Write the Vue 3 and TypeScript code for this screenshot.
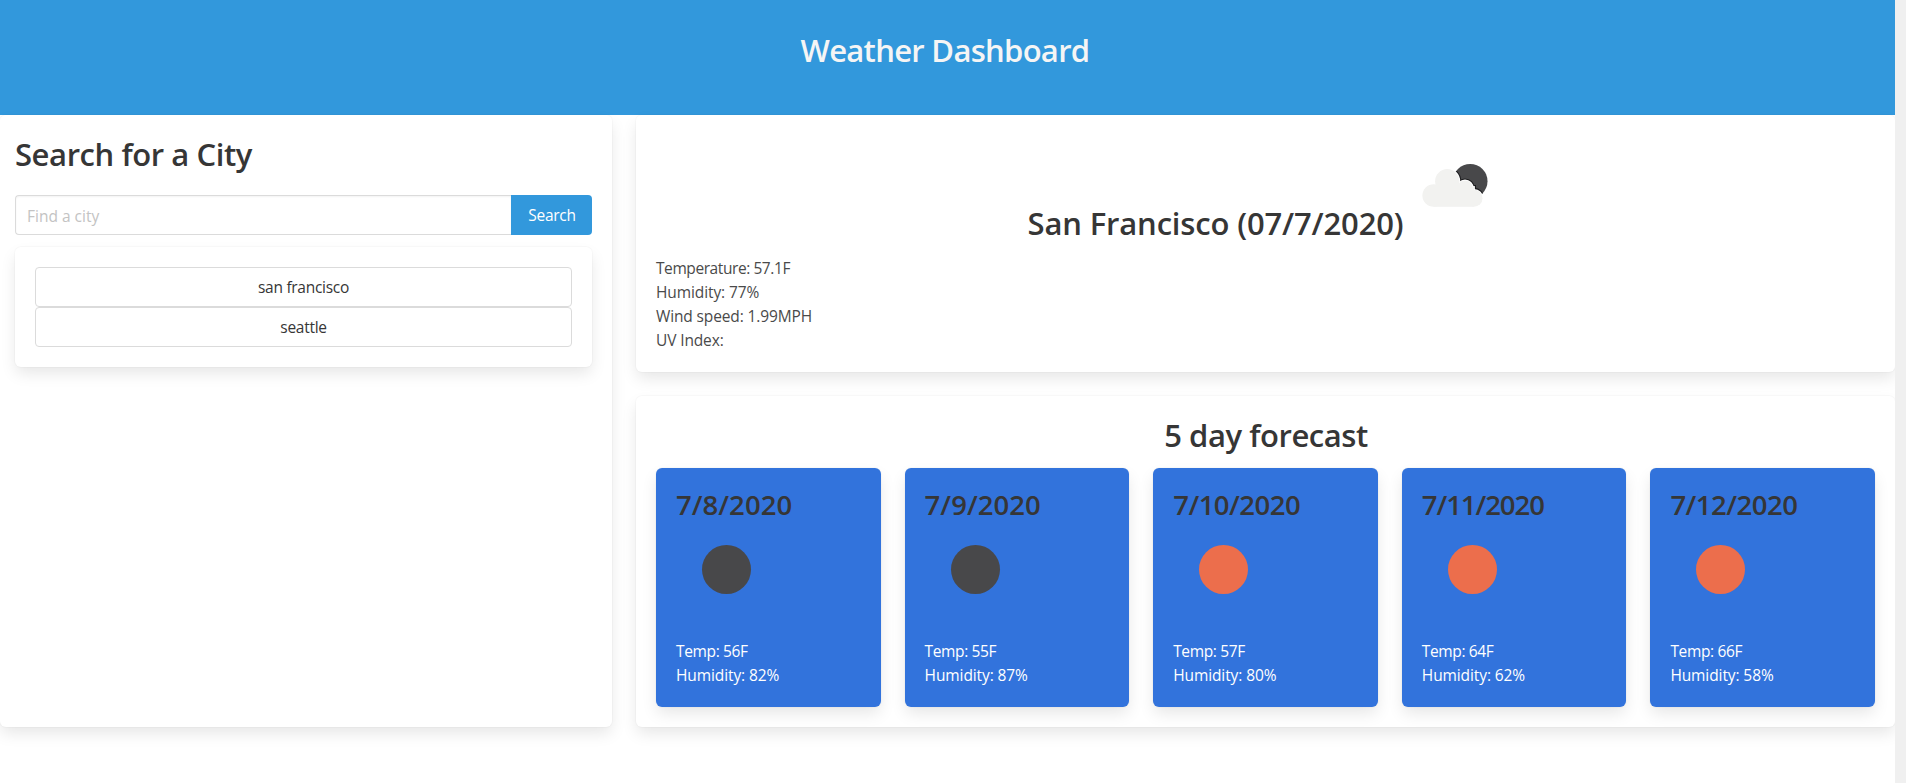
<script setup lang="ts">
import { ref } from 'vue'

interface ForecastDay {
  date: string
  sky: 'night' | 'sunny'
  temp: number
  humidity: number
  fit: string
}

const query = ref('')
const history: string[] = ['san francisco', 'seattle']

const forecast: ForecastDay[] = [
  { date: '7/8/2020', sky: 'night', temp: 56, humidity: 82, fit: 'regular' },
  { date: '7/9/2020', sky: 'night', temp: 55, humidity: 87, fit: 'regular' },
  { date: '7/10/2020', sky: 'sunny', temp: 57, humidity: 80, fit: 'tight' },
  { date: '7/11/2020', sky: 'sunny', temp: 64, humidity: 62, fit: 'tighter' },
  { date: '7/12/2020', sky: 'sunny', temp: 66, humidity: 58, fit: 'tight' },
]
</script>

<template>
  <div class="page">
    <div class="content">
      <header class="hero">
        <h1 class="title hero-title">Weather Dashboard</h1>
      </header>

      <main class="layout">
        <section class="box search-panel">
          <h2 class="title search-title">Search for a City</h2>
          <div class="search-row">
            <input v-model="query" class="input" type="text" placeholder="Find a city" />
            <button class="button primary" type="button">Search</button>
          </div>
          <div class="box history">
            <button v-for="city in history" :key="city" class="button city" type="button">{{ city }}</button>
          </div>
        </section>

        <div class="results">
          <section class="box current">
            <h2 class="title current-title"><span>San Francisco (07/7/2020)</span><svg class="icon" viewBox="0 0 100 100">
                <defs>
                  <clipPath id="moon-area"><circle cx="66.2" cy="46.2" r="17.3" /></clipPath>
                  <g id="cloud-shape">
                    <circle cx="29.7" cy="60.5" r="11.3" />
                    <circle cx="43.2" cy="46.2" r="12.1" />
                    <circle cx="61" cy="53.2" r="7.8" />
                    <circle cx="70" cy="63.3" r="8.5" />
                    <rect x="29.7" y="52" width="40.3" height="19.8" />
                  </g>
                </defs>
                <circle cx="66.2" cy="46.2" r="17.3" fill="#48484a" />
                <g clip-path="url(#moon-area)">
                  <use href="#cloud-shape" fill="#1d1d1f" stroke="#1d1d1f" stroke-width="4" />
                </g>
                <use href="#cloud-shape" fill="#fff" stroke="#fff" stroke-width="1.8" />
                <use href="#cloud-shape" fill="#f2f2f0" />
              </svg></h2>
            <p class="temperature">Temperature: 57.1F</p>
            <p class="humidity">Humidity: 77%</p>
            <p class="wind">Wind speed: 1.99MPH</p>
            <p class="wind">UV Index:</p>
          </section>

          <section class="box forecast">
            <h2 class="title forecast-title">5 day forecast</h2>
            <div class="days">
              <article v-for="day in forecast" :key="day.date" class="box day">
                <h3 class="date" :class="day.fit">{{ day.date }}</h3>
                <svg class="icon" viewBox="0 0 100 100">
                  <circle cx="50.5" cy="50.5" r="24.5" :class="day.sky" />
                </svg>
                <p class="temp">Temp: {{ day.temp }}F</p>
                <p class="humidity">Humidity: {{ day.humidity }}%</p>
              </article>
            </div>
          </section>
        </div>
      </main>
    </div>
  </div>
</template>

<style>
body {
  margin: 0;
  overflow: hidden;
}
</style>

<style scoped>
.page {
  box-sizing: border-box;
  height: 100vh;
  padding-right: 11px;
  background: #f0f0f0;
  color: #4a4a4a;
  font: 15.5px/24px "Open Sans", "Noto Sans", sans-serif;
}
.page * {
  box-sizing: border-box;
}
.content {
  height: 100%;
  overflow: hidden;
  background: #fff;
}
h1, h2, h3, p {
  margin: 0;
}
.hero {
  height: 115px;
  padding: 32px 5px 0 0;
  background: #3298dc;
}
.title {
  color: #363636;
  font-size: 31px;
  font-weight: 600;
  line-height: 36px;
  text-align: center;
}
.hero-title {
  color: #f5f5f5;
  letter-spacing: -0.7px;
}
.layout {
  display: grid;
  grid-template-columns: 612px 1fr;
  gap: 24px;
  height: 612px;
}
.box {
  border-radius: 6px;
  background: #fff;
  box-shadow: 0 0.5em 1em -0.125em rgba(10, 10, 10, 0.1), 0 0 0 1px rgba(10, 10, 10, 0.02);
}
.search-panel {
  padding: 21px 20px 20px 15px;
}
.search-title {
  margin-bottom: 23px;
  text-align: left;
  letter-spacing: -0.42px;
}
.search-row {
  display: flex;
  height: 40px;
  margin-bottom: 12px;
}
.input {
  flex: 1;
  min-width: 0;
  padding: 2px 11px 0;
  border: 1px solid #dbdbdb;
  border-right: 0;
  border-radius: 4px 0 0 4px;
  outline: none;
  background: #fff;
  box-shadow: inset 0 1px 2px rgba(10, 10, 10, 0.05);
  color: #363636;
  font: inherit;
}
.input::placeholder {
  color: #c3c3c3;
  opacity: 1;
}
.button {
  height: 40px;
  padding: 0;
  border: 1px solid #dbdbdb;
  border-radius: 4px;
  background: #fff;
  color: #363636;
  font: inherit;
}
.primary {
  width: 81px;
  padding-left: 1px;
  border: 0;
  border-radius: 0 4px 4px 0;
  background: #3298dc;
  color: #fff;
  letter-spacing: -0.25px;
}
.history {
  display: flex;
  flex-direction: column;
  padding: 20px;
}
.city {
  letter-spacing: -0.28px;
}
.results {
  display: grid;
  grid-template-rows: 257px 331px;
  gap: 24px;
}
.current,
.forecast {
  padding: 20px;
}
.current-title {
  height: 121px;
  letter-spacing: -0.15px;
}
.icon {
  width: 100px;
  height: 100px;
}
.temperature {
  letter-spacing: -0.42px;
}
.humidity {
  letter-spacing: -0.1px;
}
.wind {
  letter-spacing: -0.13px;
}
.forecast {
  padding-top: 21px;
}
.forecast-title {
  margin-bottom: 15px;
  padding-left: 1px;
  letter-spacing: -0.45px;
}
.days {
  display: grid;
  grid-template-columns: repeat(5, 1fr);
  gap: 24px;
}
.day {
  height: 239px;
  padding: 20px;
  background: #3273dc;
  color: #fff;
}
.day .icon {
  display: block;
  margin-bottom: 20px;
}
.date {
  height: 31px;
  color: #363636;
  font-size: 27.5px;
  font-weight: 600;
  line-height: 34px;
}
.regular {
  letter-spacing: 0.05px;
}
.tight {
  letter-spacing: -0.5px;
}
.tighter {
  letter-spacing: -1.05px;
}
.temp {
  letter-spacing: -0.36px;
}
.night {
  fill: #48484a;
}
.sunny {
  fill: #ec6e4c;
}
</style>
